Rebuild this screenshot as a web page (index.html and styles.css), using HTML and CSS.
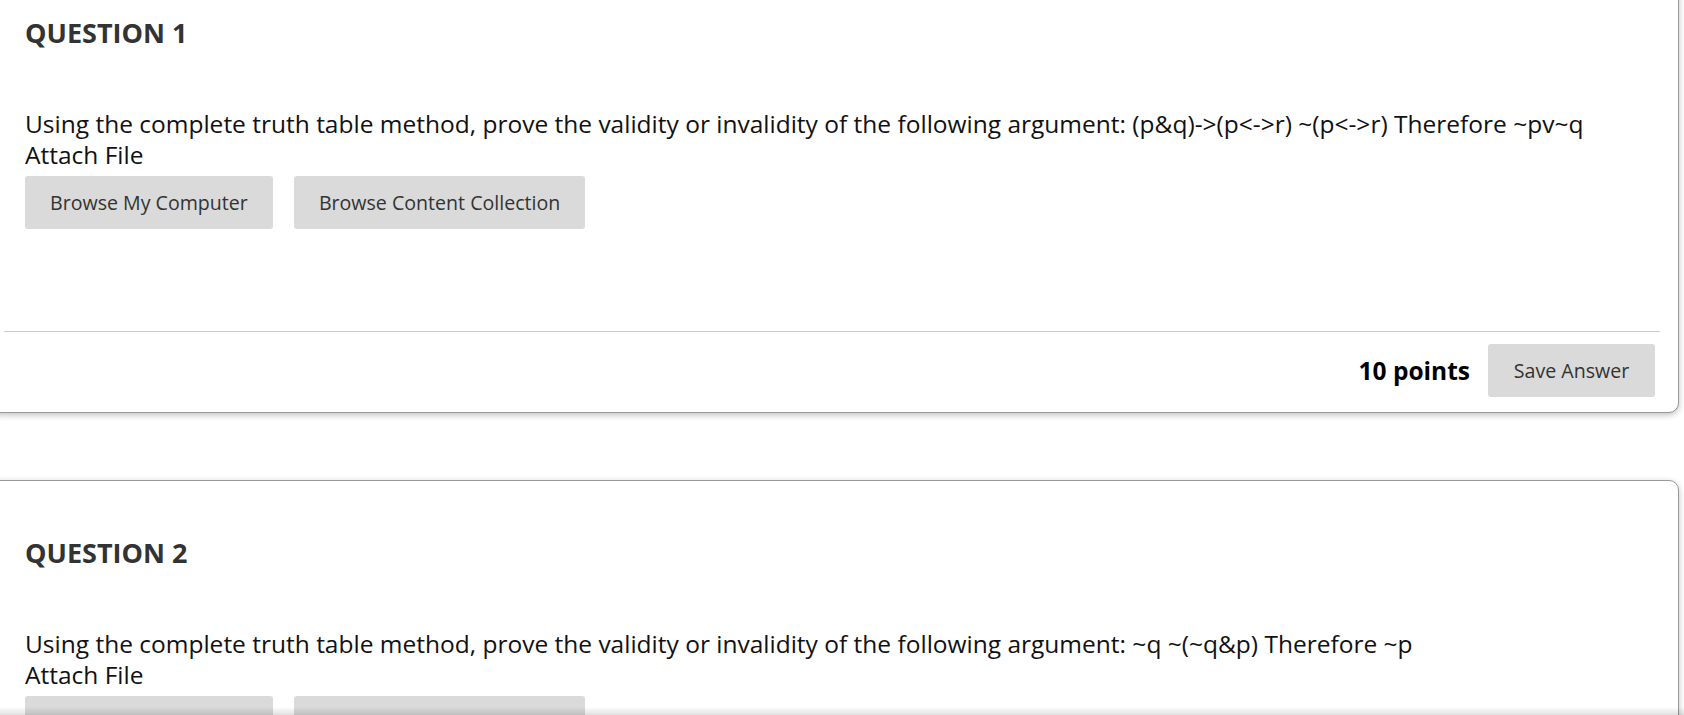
FILE: index.html
```html
<!DOCTYPE html>
<html lang="en">
<head>
    <meta charset="UTF-8">
    <title>Test</title>
    <link rel="stylesheet" href="styles.css">
</head>
<body>
    <div class="questions">
        <!-- Question 1 -->
        <div class="question first">
            <div class="question-body">
                <h3>QUESTION 1</h3>
                <div class="question-text">
                    Using the complete truth table method, prove the validity or invalidity of the following argument: (p&amp;q)-&gt;(p&lt;-&gt;r) ~(p&lt;-&gt;r) Therefore ~pv~q
                </div>
                <div class="attach-label">Attach File</div>
                <div class="attach-buttons">
                    <button class="btn btn-browse">Browse My Computer</button>
                    <button class="btn btn-browse">Browse Content Collection</button>
                </div>
            </div>
            <div class="question-footer">
                <span class="points">10 points</span>
                <button class="btn btn-save">Save Answer</button>
            </div>
        </div>

        <!-- Question 2 -->
        <div class="question">
            <div class="question-body">
                <h3>QUESTION 2</h3>
                <div class="question-text">
                    Using the complete truth table method, prove the validity or invalidity of the following argument: ~q ~(~q&amp;p) Therefore ~p
                </div>
                <div class="attach-label">Attach File</div>
                <div class="attach-buttons">
                    <button class="btn btn-browse">Browse My Computer</button>
                    <button class="btn btn-browse">Browse Content Collection</button>
                </div>
            </div>
            <div class="question-footer">
                <span class="points">10 points</span>
                <button class="btn btn-save">Save Answer</button>
            </div>
        </div>
    </div>
    <div class="bottom-shade"></div>
</body>
</html>
```

FILE: styles.css
```css
html, body {
    overflow: hidden;
}
body {
    margin: 0;
    font-family: "Open Sans", Arial, sans-serif;
    background-color: #fff;
    color: #111;
}
.questions {
    margin-left: -12px;
    margin-right: 5px;
}
.question {
    border: 1px solid #999;
    border-radius: 10px;
    background-color: #fff;
    box-shadow: 0 2px 6px rgba(0, 0, 0, 0.25);
    margin-bottom: 67px;
}
.question.first {
    margin-top: -40px;
}
.question-body {
    padding: 53px 36px 102px 21px;
    border-bottom: 1px solid #ccc;
    margin: 0 18px 0 15px;
}
.question h3 {
    margin: 0;
    font-size: 27px;
    line-height: 38px;
    font-weight: 700;
    color: #333;
}
.question-text {
    margin-top: 56px;
    font-size: 24.5px;
    line-height: 31px;
}
.attach-label {
    font-size: 24.5px;
    line-height: 31px;
}
.attach-buttons {
    display: flex;
    gap: 21px;
    margin-top: 6px;
}
.btn {
    font-family: "Open Sans", Arial, sans-serif;
    background-color: #dadada;
    color: #333;
    border: none;
    border-radius: 3px;
    height: 53px;
    font-size: 19.6px;
    padding: 0 25px;
}
.question-footer {
    display: flex;
    justify-content: flex-end;
    align-items: center;
    gap: 18px;
    padding: 12px 23px 15px 0;
}
.points {
    font-size: 24.5px;
    font-weight: 700;
    color: #000;
}
.btn-save {
    width: 167px;
    padding: 0;
}
.bottom-shade {
    position: fixed;
    left: 0;
    right: 0;
    bottom: 0;
    height: 8px;
    background: linear-gradient(rgba(0, 0, 0, 0), rgba(0, 0, 0, 0.12));
}
```
